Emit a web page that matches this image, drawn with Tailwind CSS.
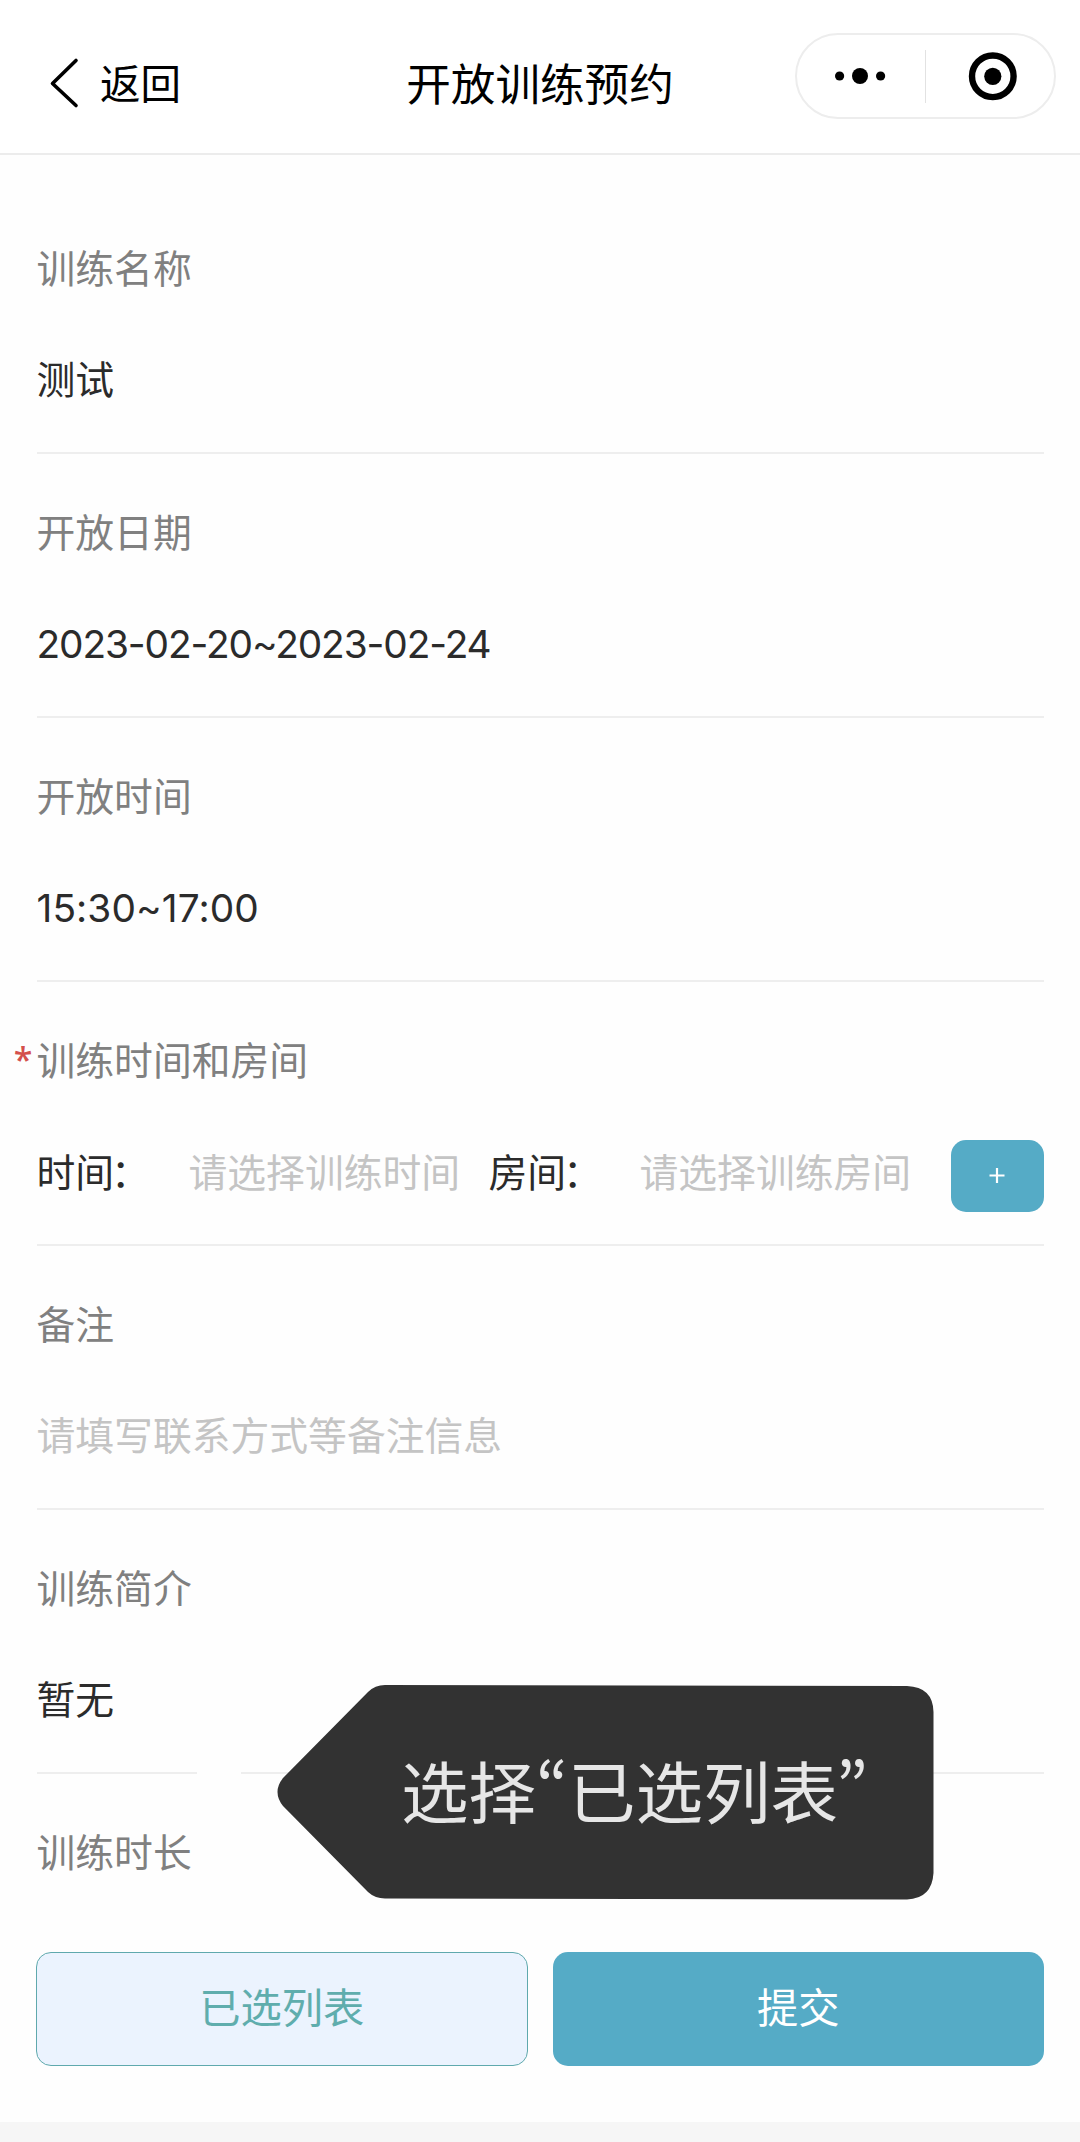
<!DOCTYPE html>
<html lang="zh-CN">
<head>
    <meta charset="UTF-8">
    <meta name="viewport" content="width=device-width, initial-scale=1.0">
    <title>开放训练预约</title>
    <script src="https://cdn.jsdelivr.net/npm/@tailwindcss/browser@4"></script>
</head>
<body class="bg-[#fefefe] h-[2142px] flex flex-col overflow-hidden font-['Inter','Noto_Sans_CJK_SC',sans-serif] text-[38.8px] leading-[56px] text-[#2b2b2b]">
    <header class="h-[155px] shrink-0 bg-white border-b-2 border-[#ececec] grid grid-cols-3 items-start text-black">
        <a href="#" class="flex items-center pl-[49px] pt-[57px] text-[40.5px]">
            <svg class="w-[30px] h-[54px] mr-[21px] -mt-[4px]" viewBox="0 0 30 54" fill="none" stroke="currentColor" stroke-width="3.6" stroke-linecap="round" stroke-linejoin="round">
                <path d="M27 4.5 3.5 27.5l23.5 22"/>
            </svg>
            返回
        </a>
        <h1 class="pt-[57px] text-[44.6px] text-center whitespace-nowrap">开放训练预约</h1>
        <div class="justify-self-end mt-[33px] mr-[24px] w-[261px] h-[86px] rounded-full border-2 border-[#ededed] flex items-center">
            <svg class="w-[257px] h-[82px]" viewBox="0 0 257 82">
                <circle cx="42.6" cy="41" r="4.6"/>
                <circle cx="63" cy="41" r="8"/>
                <circle cx="83.6" cy="41" r="4.6"/>
                <path d="M128.5 15v53" stroke="#e2e2e2" stroke-width="1"/>
                <circle cx="195.8" cy="41.3" r="20.8" fill="none" stroke="#000" stroke-width="6.4"/>
                <circle cx="195.8" cy="41.3" r="8.6"/>
            </svg>
        </div>
    </header>

    <main class="relative flex-grow px-[36.5px] pt-[35px]">
        <section class="h-[264px] pt-[51px] border-b-2 border-[#eeeeee]">
            <h2 class="text-[#808080]">训练名称</h2>
            <p class="mt-[55px]">测试</p>
        </section>
        <section class="h-[264px] pt-[51px] border-b-2 border-[#eeeeee]">
            <h2 class="text-[#808080]">开放日期</h2>
            <p class="mt-[55px] tracking-[-1.1px]">2023-02-20~2023-02-24</p>
        </section>
        <section class="h-[264px] pt-[51px] border-b-2 border-[#eeeeee]">
            <h2 class="text-[#808080]">开放时间</h2>
            <p class="mt-[55px] tracking-[0.1px]">15:30~17:00</p>
        </section>
        <section class="h-[264px] pt-[51px] border-b-2 border-[#eeeeee]">
            <h2 class="relative text-[#808080]">
                <span class="absolute right-full -top-[2px] mr-[4px] text-[34px] font-medium text-[#d4504c] font-['Noto_Sans']">*</span>训练时间和房间
            </h2>
            <div class="mt-[51px] flex items-start font-['Noto_Sans_CJK_SC']">
                <span class="w-[152px] pt-[2px]">时间<span class="relative -left-[3px]">：</span></span>
                <span class="w-[300px] pt-[2px] text-[#c4c4c4]">请选择训练时间</span>
                <span class="w-[151px] pt-[2px]">房间<span class="relative -left-[3px]">：</span></span>
                <span class="pt-[2px] text-[#c4c4c4]">请选择训练房间</span>
                <button class="ml-auto w-[93px] h-[72px] rounded-[15px] bg-[#55abc6] flex items-center justify-center">
                    <svg class="w-[16px] h-[16px]" viewBox="0 0 16 16" stroke="#fff" stroke-width="2.2"><path d="M8 0v15M.5 7.5h15"/></svg>
                </button>
            </div>
        </section>
        <section class="h-[264px] pt-[51px] border-b-2 border-[#eeeeee]">
            <h2 class="text-[#808080]">备注</h2>
            <p class="mt-[55px] text-[#c4c4c4]">请填写联系方式等备注信息</p>
        </section>
        <section class="relative h-[264px] pt-[51px] border-b-2 border-[#eeeeee]">
            <h2 class="text-[#808080]">训练简介</h2>
            <p class="mt-[55px]">暂无</p>
            <span class="absolute left-[160px] -bottom-[4px] w-[44px] h-[6px] bg-[#fefefe]"></span>
        </section>
        <section class="pt-[51px]">
            <h2 class="text-[#808080]">训练时长</h2>
        </section>

        <!-- 提示气泡 -->
        <div class="absolute left-[277px] top-[1529px] w-[657px] h-[216px]">
            <svg class="absolute inset-0 w-full h-full" viewBox="0 0 657 216" fill="#323232">
                <path d="M108 1 L630 2 Q656 3 656.5 28 L656.5 189 Q655 214.5 630 215.5 L108 214.5 Q98 214.5 91 208 L6 122 Q-5 108 6 94 L91 8 Q98 1 108 1Z"/>
            </svg>
            <p class="relative pl-[124px] -top-[3px] h-full flex items-center text-[67.5px] text-[#e6e6e6] whitespace-nowrap font-['Noto_Sans_CJK_SC']"><span>选择<span class="[font-feature-settings:'pwid']">“</span>已选列表<span class="relative -left-[2px] [font-feature-settings:'pwid']">”</span></span></p>
        </div>
    </main>

    <footer class="shrink-0 h-[190px] px-[36px] border-b-[20px] border-[#f6f6f6] grid grid-cols-2 gap-[25px] items-start text-[41.3px]">
        <button class="h-[114px] pb-[2px] rounded-[15px] border border-[#5fa9ad] bg-[#ebf3fe] text-[#5fadad]">已选列表</button>
        <button class="h-[114px] pb-[2px] rounded-[15px] bg-[#55abc6] text-white">提交</button>
    </footer>
</body>
</html>
